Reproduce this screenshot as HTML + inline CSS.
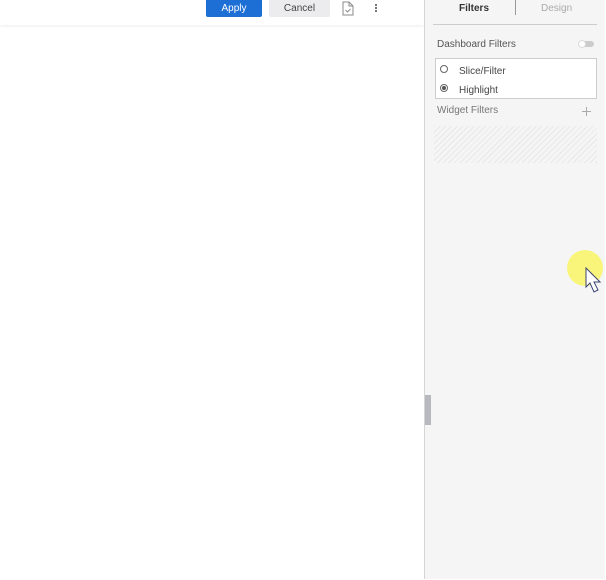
<!DOCTYPE html>
<html><head><meta charset="utf-8"><style>
*{margin:0;padding:0;box-sizing:border-box}
body{width:606px;height:580px;overflow:hidden;background:#fff;font-family:"Liberation Sans",sans-serif;position:relative}
.topbar{position:absolute;left:0;top:0;width:424px;height:25px;background:#fff;box-shadow:0 1px 3px rgba(0,0,0,.08)}
.apply{position:absolute;left:206px;top:-2px;width:56px;height:19px;background:#1d6fd6;color:#fff;font-size:10px;text-align:center;line-height:21px;border-radius:2px}
.cancel{position:absolute;left:269px;top:-2px;width:61px;height:19px;background:#ececee;color:#444;font-size:10px;text-align:center;line-height:21px;border-radius:2px}
.panel{position:absolute;left:424px;top:0;width:181px;height:579px;background:#f5f5f5;border-left:1px solid #d4d4d4}
.t{position:absolute;font-size:10px;color:#555}
.box{position:absolute;left:10px;top:58px;width:162px;height:41px;border:1px solid #ccc;background:#fff}
.r{position:absolute;width:8px;height:8px;border:1px solid #666;border-radius:50%;background:#fff}
.hatch{position:absolute;left:9px;top:126px;width:163px;height:37px;background:repeating-linear-gradient(135deg,#e8e8e8 0 1px,#f5f5f5 1px 4px)}
</style></head><body>
<div class="topbar">
<div class="apply">Apply</div>
<div class="cancel">Cancel</div>
<svg style="position:absolute;left:342px;top:1px" width="12" height="15" viewBox="0 0 12 15"><path d="M1 1h6l4 4v9H1z M7 1v4h4" fill="none" stroke="#888" stroke-width="1"/><path d="M3.5 9l2 2 3-3" fill="none" stroke="#888"/></svg>
<div style="position:absolute;left:375px;top:4px;width:2px;height:2px;background:#777;box-shadow:0 3px 0 #777,0 6px 0 #777"></div>
</div>
<div class="panel">
<div class="t" style="left:34px;top:3px;color:#333;font-weight:bold">Filters</div>
<div style="position:absolute;left:90px;top:0;width:1px;height:15px;background:#999"></div>
<div class="t" style="left:116px;top:3px;color:#aaa">Design</div>
<div style="position:absolute;left:8px;top:24px;width:164px;height:1px;background:#ccc"></div>
<div class="t" style="left:12px;top:39px;color:#555">Dashboard Filters</div>
<div style="position:absolute;left:153px;top:41px;width:16px;height:6px;border-radius:3px;background:#ccc"></div>
<div style="position:absolute;left:153px;top:40px;width:8px;height:8px;border-radius:50%;background:#fff;border:1px solid #ddd"></div>
<div class="box">
<div class="r" style="left:4px;top:6px"></div>
<div class="t" style="left:23px;top:7px;color:#444">Slice/Filter</div>
<div class="r" style="left:4px;top:25px"><div style="position:absolute;left:1px;top:1px;width:4px;height:4px;border-radius:50%;background:#555"></div></div>
<div class="t" style="left:23px;top:26px;color:#444">Highlight</div>
</div>
<div class="t" style="left:12px;top:105px;color:#777">Widget Filters</div>
<div style="position:absolute;left:157px;top:111px;width:9px;height:1px;background:#aaa"></div>
<div style="position:absolute;left:161px;top:107px;width:1px;height:9px;background:#aaa"></div>
<div class="hatch"></div>
<div style="position:absolute;left:0;top:395px;width:6px;height:30px;background:#b8b9bf"></div>
<div style="position:absolute;left:142px;top:250px;width:36px;height:36px;border-radius:50%;background:#f8f57a"></div>
<svg style="position:absolute;left:160px;top:267px" width="22" height="28" viewBox="0 0 22 28"><path d="M1 1v19l4-4 4 9 4-2-4-8h6z" fill="#fff" stroke="#3a4370" stroke-width="1"/></svg>
</div>
<div style="position:absolute;left:605px;top:0;width:1px;height:580px;background:#fff"></div>
</body></html>
